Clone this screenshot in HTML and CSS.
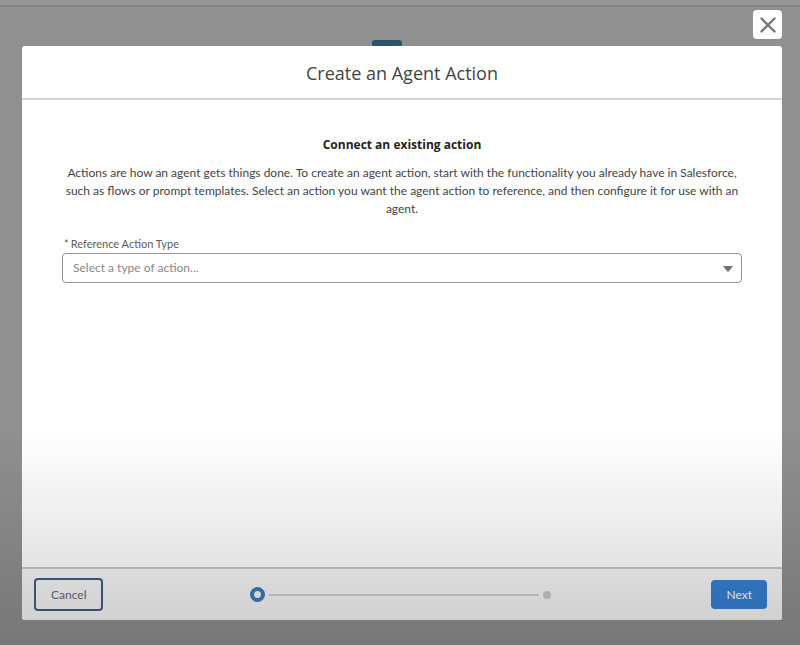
FILE: index.html
```html
<!DOCTYPE html>
<html lang="en">
<head>
<meta charset="utf-8">
<meta name="viewport" content="width=device-width, initial-scale=1">
<title>Create an Agent Action</title>
<link rel="stylesheet" href="styles.css">
</head>
<body>
<div class="page-strip"></div>
<div class="layer">
  <div class="close-row">
    <button class="close" type="button" aria-label="Close">
      <svg width="16" height="16" viewBox="0 0 16 16" fill="none" stroke="#777" stroke-width="2.4" stroke-linecap="round"><path d="M1.5 1.5l13 13M14.5 1.5l-13 13"/></svg>
    </button>
  </div>
  <section class="modal" role="dialog" aria-labelledby="title">
    <span class="page-tab"></span>
    <header class="modal-header"><h1 id="title">Create an Agent Action</h1></header>
    <main class="modal-body">
      <h2>Connect an existing action</h2>
      <p>Actions are how an agent gets things done. To create an agent action, start with the functionality you already have in Salesforce, such as flows or prompt templates. Select an action you want the agent action to reference, and then configure it for use with an agent.</p>
      <label for="type"><span class="required">*</span>Reference Action Type</label>
      <div class="select-wrap">
        <select id="type" required><option value="">Select a type of action...</option></select>
        <svg class="arrow" width="10" height="6" viewBox="0 0 10 6"><path d="M.8 0h8.4q1 0 .4.8L5.6 5.6q-.6.6-1.2 0L.4.8Q-.2 0 .8 0z" fill="#757575"/></svg>
      </div>
    </main>
    <footer class="modal-footer">
      <button class="button cancel" type="button">Cancel</button>
      <div class="progress">
        <span class="step current"></span>
        <span class="track"></span>
        <span class="step"></span>
      </div>
      <button class="button next" type="button">Next</button>
    </footer>
  </section>
</div>
<div class="shade"></div>
</body>
</html>
```
FILE: styles.css
```css
* { box-sizing: border-box; }

body {
  margin: 0;
  min-height: 100vh;
  display: flex;
  flex-direction: column;
  background: #909090;
  color: #444;
  font: 12px/18px Lato, "Open Sans", sans-serif;
}

button, select { font: inherit; }

.page-strip {
  height: 7px;
  background: #969696;
  border-bottom: 2px solid #858585;
}

.layer {
  flex: 1;
  display: flex;
  flex-direction: column;
  padding: 3px 18px 25px 22px;
}

.close-row {
  display: flex;
  justify-content: flex-end;
  margin-bottom: 7px;
}

.close {
  display: grid;
  place-items: center;
  width: 29px;
  height: 29px;
  padding: 0;
  border: 0;
  border-radius: 4px;
  background: #fff;
}

.modal {
  position: relative;
  flex: 1;
  display: flex;
  flex-direction: column;
  border-radius: 3px;
  background: #fff;
}

.page-tab {
  position: absolute;
  top: -6px;
  left: 46%;
  width: 30px;
  height: 6px;
  border-radius: 3px 3px 0 0;
  background: #2f5468;
}

.modal-header {
  padding: 15px 16px 13px;
  border-bottom: 2px solid #d4d4d4;
  text-align: center;
}

h1, h2 { font-family: "Open Sans", sans-serif; }

h1 {
  margin: 0;
  font-size: 18px;
  line-height: 24px;
  font-weight: 400;
}

.modal-body {
  flex: 1;
  padding: 36px 40px;
}

h2 {
  margin: 0 0 10px;
  color: #222;
  font-size: 12px;
  line-height: 18px;
  font-weight: 700;
  text-align: center;
}

p {
  margin: 0 0 18px;
  text-align: center;
}

label {
  display: block;
  padding-left: 2px;
  color: #5c5c5c;
  font-size: 11px;
  line-height: 16px;
}

.required { margin-right: 2px; }

.select-wrap {
  position: relative;
  margin-top: 1px;
}

select {
  display: block;
  appearance: none;
  width: 100%;
  height: 30px;
  padding: 0 32px 0 10px;
  border: 1px solid #959595;
  border-radius: 4px;
  background: #fff;
  color: #888;
}

.arrow {
  position: absolute;
  top: 13px;
  right: 9px;
  pointer-events: none;
}

.modal-footer {
  display: grid;
  grid-template-columns: 1fr 41% 1fr;
  align-items: center;
  padding: 9px 15px 9px 12px;
  border-top: 2px solid #c8c8c8;
  border-radius: 0 0 3px 3px;
  background: #f6f6f6;
}

.button {
  border-radius: 4px;
  padding: 0 15px;
}

.cancel {
  justify-self: start;
  height: 33px;
  border: 2px solid #405f80;
  background: #f6f6f6;
  color: #5d6b7c;
}

.next {
  justify-self: end;
  height: 29px;
  border: 0;
  background: #3781d6;
  color: #fff;
}

.progress {
  display: flex;
  align-items: center;
  gap: 4px;
}

.step {
  width: 8px;
  height: 8px;
  border-radius: 50%;
  background: #c8c8c8;
}

.current {
  width: 15px;
  height: 15px;
  border: 4px solid #3c7cba;
  background: #f6f6f6;
}

.track {
  flex: 1;
  height: 2px;
  background: #d2d2d2;
}

.shade {
  position: fixed;
  inset: 67% 0 0;
  background: linear-gradient(transparent, rgba(0, 0, 0, 0.17));
  pointer-events: none;
}
```
